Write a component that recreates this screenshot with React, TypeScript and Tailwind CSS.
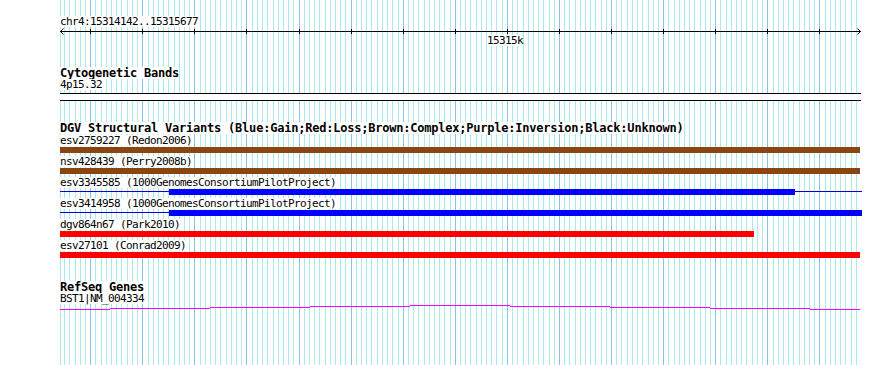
const START = 15314142;
const END = 15315677;
const SCALE = 800 / (END - START + 1);
const px = (bp: number) => Math.round(60 + (bp - START) * SCALE);

const gridLines = (() => {
    const out: { x: number; major: boolean }[] = [{ x: 60, major: false }];
    for (let bp = 15314150; bp <= 15315670; bp += 10) {
        out.push({ x: px(bp), major: bp % 100 === 0 });
    }
    return out;
})();

const majorTicks = gridLines.filter((l) => l.major).map((l) => l.x);

type Segment = { w: number; thin?: boolean };
type Variant = { label: string; color: string; segments: Segment[] };

const variants: Variant[] = [
    { label: 'esv2759227 (Redon2006)', color: 'bg-[#8b4513]', segments: [{ w: 800 }] },
    { label: 'nsv428439 (Perry2008b)', color: 'bg-[#8b4513]', segments: [{ w: 800 }] },
    {
        label: 'esv3345585 (1000GenomesConsortiumPilotProject)',
        color: 'bg-[#0000ff]',
        segments: [{ w: 109, thin: true }, { w: 626 }, { w: 67, thin: true }],
    },
    {
        label: 'esv3414958 (1000GenomesConsortiumPilotProject)',
        color: 'bg-[#0000ff]',
        segments: [{ w: 109, thin: true }, { w: 693 }],
    },
    { label: 'dgv864n67 (Park2010)', color: 'bg-[#ff0000]', segments: [{ w: 694 }] },
    { label: 'esv27101 (Conrad2009)', color: 'bg-[#ff0000]', segments: [{ w: 800 }] },
];

// gene model: x0, x1, row inside the 6px strip
const geneParts: [number, number, number][] = [
    [60, 110, 5],
    [110, 210, 4],
    [210, 310, 3],
    [310, 410, 2],
    [410, 510, 1],
    [510, 610, 2],
    [610, 710, 3],
    [710, 810, 4],
    [810, 860, 5],
];

const Grid = () => (
    <svg className="absolute inset-0" width={890} height={365} shapeRendering="crispEdges">
        {gridLines.map((l, i) => (
            <rect key={i} x={l.x} y={0} width={1} height={365} fill={l.major ? '#8cc0ea' : '#aae9ec'} />
        ))}
    </svg>
);

const Small = ({ children, className = '' }: { children: React.ReactNode; className?: string }) => (
    <div className={`h-[11px] text-[11px] leading-[11px] tracking-[-0.62px] ${className}`}>
        <span className="inline-block bg-white align-top">{children}</span>
    </div>
);

const Header = ({ children, className = '' }: { children: React.ReactNode; className?: string }) => (
    <div className={`ml-[60px] h-[12px] text-[12px] font-bold leading-[12px] tracking-[-0.22px] ${className}`}>
        <span className="inline-block bg-white align-top">{children}</span>
    </div>
);

const Ruler = () => (
    <svg width={890} height={8} className="block" shapeRendering="crispEdges">
        <rect x={60} y={4} width={801} height={1} fill="#000" />
        {majorTicks.map((x) => (
            <rect key={x} x={x} y={2} width={1} height={5} fill="#000" />
        ))}
        <path d="M63.5 1.5 L60.5 4.5 L63.5 7.5" stroke="#000" fill="none" shapeRendering="auto" />
        <path d="M857.5 1.5 L860.5 4.5 L857.5 7.5" stroke="#000" fill="none" shapeRendering="auto" />
    </svg>
);

const VariantRow = ({ v }: { v: Variant }) => (
    <div className="h-[21px]">
        <Small className="ml-[60px]">{v.label}</Small>
        <div className="mt-[1px] ml-[60px] flex h-[6px] items-start">
            {v.segments.map((s, i) => (
                <div
                    key={i}
                    className={s.thin ? 'mt-[2px] h-px shrink-0 bg-[#0000d8]' : `h-[6px] shrink-0 ${v.color}`}
                    style={{ width: s.w }}
                />
            ))}
        </div>
    </div>
);

export default function App() {
    return (
        <div className="relative h-[365px] w-[890px] overflow-hidden bg-white font-['DejaVu_Sans_Mono',monospace] text-black">
            <Grid />
            <div className="relative pt-[16px]">
                <Small className="ml-[60px]">chr4:15314142..15315677</Small>
                <Ruler />
                <Small className="ml-[487px]">15315k</Small>

                <Header className="mt-[21px]">Cytogenetic Bands</Header>
                <Small className="ml-[60px]">4p15.32</Small>
                <div className="mt-[3px] ml-[60px] h-[8px] w-[801px] border-y border-black bg-white" />

                <Header className="mt-[21px]">
                    DGV Structural Variants (Blue:Gain;Red:Loss;Brown:Complex;Purple:Inversion;Black:Unknown)
                </Header>
                <div className="mt-[1px]">
                    {variants.map((v) => (
                        <VariantRow key={v.label} v={v} />
                    ))}
                </div>

                <Header className="mt-[20px]">RefSeq Genes</Header>
                <Small className="ml-[60px]">BST1|NM_004334</Small>
                <svg width={890} height={6} className="block" shapeRendering="crispEdges">
                    {geneParts.map(([x0, x1, y]) => (
                        <rect key={x0} x={x0} y={y} width={x1 - x0} height={1} fill="#ff00ff" />
                    ))}
                </svg>
            </div>
        </div>
    );
}
